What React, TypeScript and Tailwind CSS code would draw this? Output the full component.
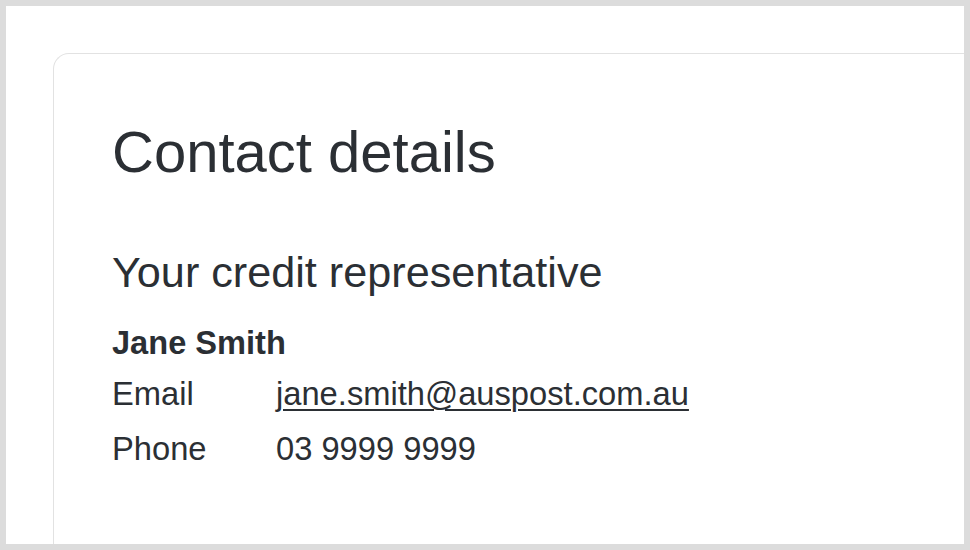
import React from "react";

export default function App() {
  return (
    <div className="w-[970px] h-[550px] bg-[#dcdcdc] p-[6px] box-border" style={{ fontFamily: '"Liberation Sans", Arial, sans-serif' }}>
      <div className="w-full h-full bg-white overflow-hidden pl-[47px] pt-[47px]">
        <div className="w-[1000px] h-[600px] border-t border-l border-[#e2e2e2] rounded-tl-[16px] pl-[58px] pt-[69px] text-[#2b2f34]">
          <h1 className="text-[58px] leading-[58px] font-normal m-0">Contact details</h1>
          <h2 className="text-[43.2px] leading-[43px] font-normal mt-[70px]">Your credit representative</h2>
          <div className="text-[32.6px] leading-[32px] font-bold mt-[33px]">Jane Smith</div>
          <div className="flex text-[32.7px] leading-[32px] mt-[19px]">
            <span className="w-[164px]">Email</span>
            <a href="#" className="underline decoration-[2px] underline-offset-[4px] text-[#2b2f34]">jane.smith@auspost.com.au</a>
          </div>
          <div className="flex text-[32.7px] leading-[32px] mt-[23px]">
            <span className="w-[164px]">Phone</span>
            <span>03 9999 9999</span>
          </div>
        </div>
      </div>
    </div>
  );
}
